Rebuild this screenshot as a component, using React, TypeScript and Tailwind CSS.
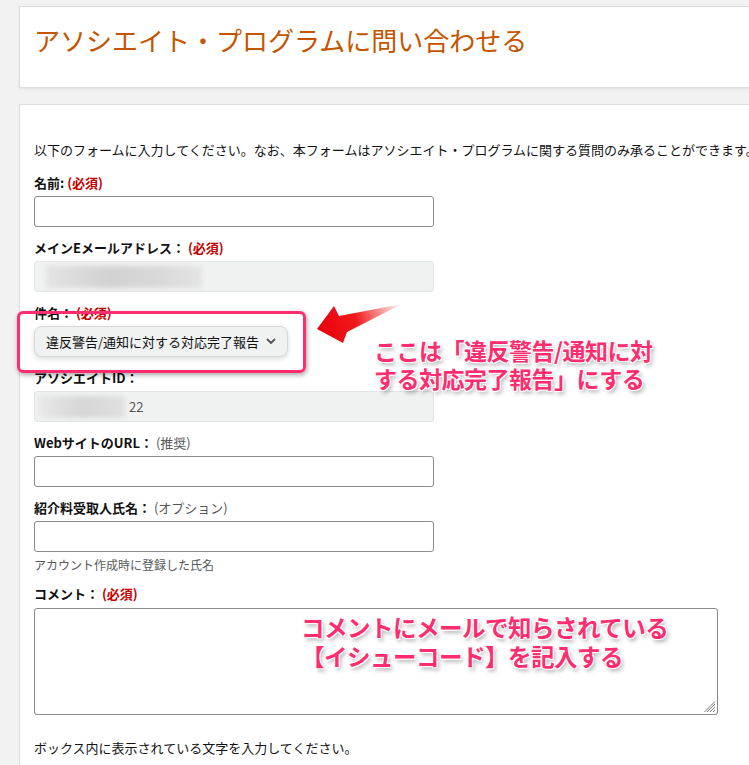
import React from 'react';

const font = "font-['Noto_Sans_CJK_JP','Noto_Sans',sans-serif]";

const Req = () => <span className="text-[#c40000] font-bold">(必須)</span>;
const Opt = ({ text }: { text: string }) => (
  <span className="text-[#555] font-normal">{text}</span>
);

const Label = ({ children }: { children: React.ReactNode }) => (
  <div className="h-[18px] leading-[18px] text-[13px] font-bold text-[#111] whitespace-nowrap">
    {children}
  </div>
);

const TextInput = () => (
  <div className="mt-[4px] w-[400px] h-[31px] rounded-[3px] border border-[#888c8c] bg-white" />
);

const GreyInput = ({ children }: { children?: React.ReactNode }) => (
  <div className="mt-[4px] w-[400px] h-[31px] rounded-[3px] border border-[#e3e6e6] bg-[#f0f1f1] flex items-center px-[3px] text-[13px] text-[#555]">
    {children}
  </div>
);

const annot =
  "font-bold text-[#ff2d6f] [text-shadow:0_0_1px_#fff,1px_1px_0_#fff,-1px_-1px_0_#fff,1px_-1px_0_#fff,-1px_1px_0_#fff,2px_3px_4px_rgba(0,0,0,0.35)]";

export default function App() {
  return (
    <div className={`relative w-[749px] h-[765px] overflow-hidden bg-[#f2f2f2] ${font}`}>
      <div className="pt-[6px] pl-[19px] flex flex-col gap-[16px]">
        {/* title card */}
        <div className="w-[900px] h-[82px] bg-white border border-[#dddddd] shadow-[0_1px_2px_rgba(0,0,0,0.08)] pl-[14px] pt-[15px]">
          <h1 className="text-[26px] leading-[36px] text-[#c45500] font-normal">
            アソシエイト・プログラムに問い合わせる
          </h1>
        </div>

        {/* form card */}
        <div className="w-[900px] h-[700px] bg-white border border-[#dddddd] pl-[14px] pt-[36px]">
          <p className="h-[18px] leading-[18px] text-[13px] text-[#111] whitespace-nowrap">
            以下のフォームに入力してください。なお、本フォームはアソシエイト・プログラムに関する質問のみ承ることができます。
          </p>

          <div className="mt-[15px] flex flex-col gap-[12px]">
            <div>
              <Label>
                名前: <Req />
              </Label>
              <TextInput />
            </div>
            <div>
              <Label>
                メインEメールアドレス： <Req />
              </Label>
              <GreyInput>
                <div className="ml-[8px] w-[156px] h-[22px] bg-[linear-gradient(90deg,#e4e4e4,#d2d2d2_40%,#d8d8d8_70%,#e4e4e4)] blur-[2px]" />
              </GreyInput>
            </div>
            <div>
              <Label>
                件名： <Req />
              </Label>
              <div className="mt-[4px] w-[254px] h-[31px] rounded-[8px] border border-[#d5d9d9] bg-[#f0f2f2] shadow-[0_2px_5px_rgba(15,17,17,0.15)] flex items-center justify-between pl-[11px] pr-[11px] text-[13px] text-[#111]">
                <span>違反警告/通知に対する対応完了報告</span>
                <svg width="10" height="7" viewBox="0 0 10 7" fill="none">
                  <path d="M1.5 1.5 L5 5 L8.5 1.5" stroke="#555" strokeWidth="1.8" strokeLinecap="round" strokeLinejoin="round" />
                </svg>
              </div>
            </div>
            <div>
              <Label>アソシエイトID：</Label>
              <GreyInput>
                <div className="ml-[1px] w-[86px] h-[22px] bg-[linear-gradient(90deg,#e8e8e8,#d6d6d6_50%,#e0e0e0)] blur-[2px]" />
                <span className="ml-[4px]">22</span>
              </GreyInput>
            </div>
            <div>
              <Label>
                WebサイトのURL： <Opt text="(推奨)" />
              </Label>
              <TextInput />
            </div>
            <div>
              <Label>
                紹介料受取人氏名： <Opt text="(オプション)" />
              </Label>
              <TextInput />
              <div className="mt-[4px] h-[18px] leading-[18px] text-[12px] text-[#565959]">
                アカウント作成時に登録した氏名
              </div>
            </div>
            <div className="-mt-[1px]">
              <Label>
                コメント： <Req />
              </Label>
              <div className="relative mt-[5px] w-[684px] h-[107px] rounded-[3px] border border-[#888c8c] bg-white">
                <svg className="absolute right-[1px] bottom-[1px]" width="12" height="12" viewBox="0 0 12 12">
                  <path d="M11 3 L3 11 M11 6 L6 11 M11 9 L9 11 M11 0.5 L0.5 11" stroke="#777" strokeWidth="1" />
                </svg>
              </div>
            </div>
          </div>

          <p className="mt-[24px] h-[18px] leading-[18px] text-[13px] text-[#111]">
            ボックス内に表示されている文字を入力してください。
          </p>
        </div>
      </div>

      {/* annotation overlays */}
      <div className="absolute left-[17px] top-[311px] w-[289px] h-[62px] rounded-[6px] border-[3px] border-[#ff2d6f] shadow-[1px_2px_5px_rgba(0,0,0,0.35)]" />

      <svg className="absolute left-0 top-0" width="749" height="765" viewBox="0 0 749 765">
        <defs>
          <linearGradient id="arrowGrad" x1="318" y1="333" x2="402" y2="304" gradientUnits="userSpaceOnUse">
            <stop offset="0" stopColor="#e8000a" />
            <stop offset="0.45" stopColor="#f01a1a" />
            <stop offset="1" stopColor="#f01a1a" stopOpacity="0" />
          </linearGradient>
        </defs>
        <polygon
          points="317,329 334,306 339,316 402,304 347,332 343,343"
          fill="url(#arrowGrad)"
        />
      </svg>

      <div className={`absolute left-[374px] top-[336px] text-[23px] leading-[28px] tracking-[-0.5px] ${annot}`}>
        ここは「違反警告/通知に対
        <br />
        する対応完了報告」にする
      </div>

      <div className={`absolute left-[301px] top-[613px] text-[23.5px] leading-[29px] tracking-[-0.5px] ${annot}`}>
        コメントにメールで知らされている
        <br />
        【イシューコード】を記入する
      </div>
    </div>
  );
}
